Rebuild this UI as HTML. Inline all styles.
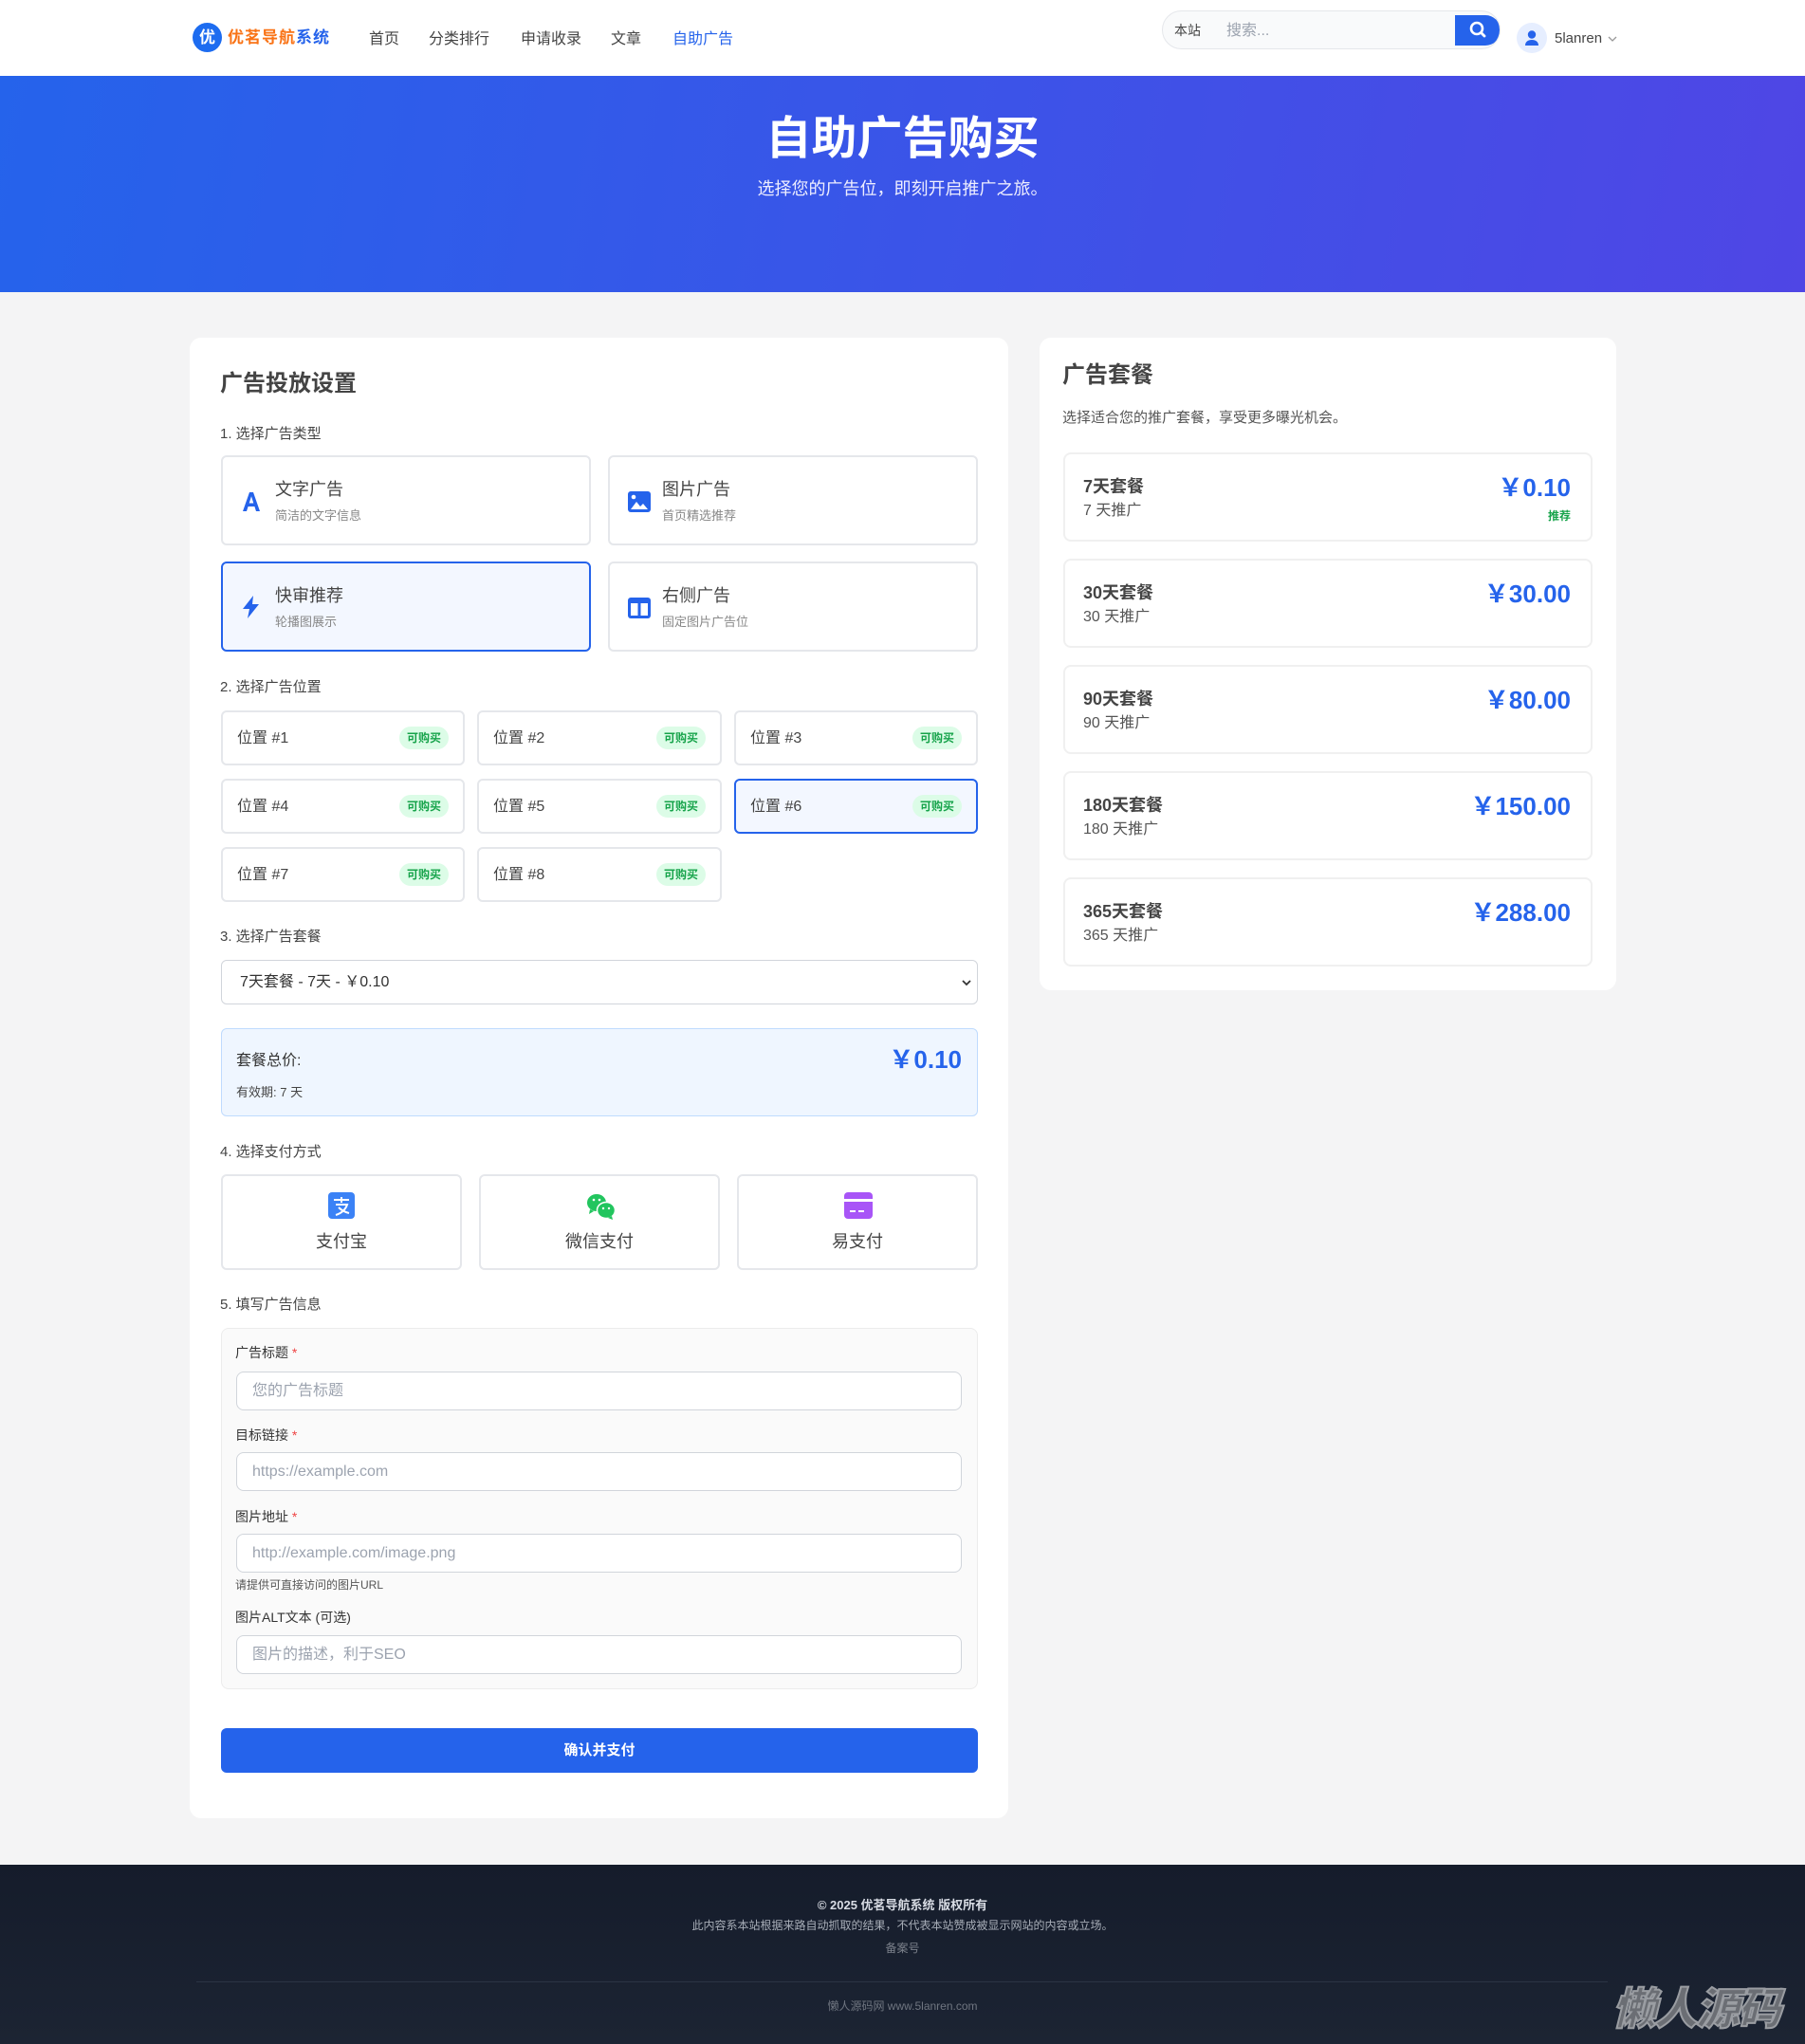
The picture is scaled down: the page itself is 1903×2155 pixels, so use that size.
<!DOCTYPE html>
<html><head><meta charset="utf-8">
<style>
*{box-sizing:border-box;margin:0;padding:0}
body{width:1903px;height:2155px;background:#f4f4f5;font-family:"Liberation Sans","Noto Sans CJK SC",sans-serif;color:#333;position:relative;overflow:hidden}
.a{position:absolute}
.hdr{left:0;top:0;width:1903px;height:80px;background:#fff}
.nav{top:31px;font-size:16px;color:#444;line-height:22px}
.hero{left:0;top:80px;width:1903px;height:228px;background:linear-gradient(100deg,#2563eb 0%,#4f46e5 100%)}
.card{background:#fff;border-radius:12px}
.lbl{font-size:15px;color:#444;line-height:20px}
.tc{border:2px solid #e5e7eb;border-radius:6px;background:#fff}
.tc.sel{border-color:#2563eb;background:#f3f7ff}
.tc .t{position:absolute;left:55px;top:22px;font-size:18px;color:#444;line-height:24px}
.tc .s{position:absolute;left:55px;top:54px;font-size:13px;color:#888;line-height:16px}
.tc svg{position:absolute;left:19px;top:36px}
.pc{border:2px solid #e5e7eb;border-radius:6px;background:#fff;height:58px}
.pc.sel{border-color:#2563eb;background:#f3f7ff}
.pc .t{position:absolute;left:15px;top:18px;font-size:16px;color:#444;line-height:20px}
.pc .b{position:absolute;right:15px;top:15px;width:52px;height:24px;border-radius:12px;background:#dcfce7;color:#16a34a;font-size:12px;font-weight:bold;text-align:center;line-height:24px}
.pay{border:2px solid #e5e7eb;border-radius:6px;background:#fff;top:1238px;height:101px}
.pay .t{position:absolute;left:0;right:0;top:57px;text-align:center;font-size:18px;color:#444;line-height:24px}
.pay svg{position:absolute;left:50%;top:17px;margin-left:-14px}
.fl{font-size:14px;color:#333;line-height:18px;left:248px}
.fl i{color:#ef4444;font-style:normal}
.inp{left:249px;width:765px;height:41px;border:1px solid #d1d5db;border-radius:8px;background:#fff;font-size:16px;color:#9ca3af;padding-left:16px;line-height:39px}
.pk{left:1121px;width:558px;height:94px;border:2px solid #f0f0f0;border-radius:8px;background:#fff}
.pk .n{position:absolute;left:19px;top:22px;font-size:18px;font-weight:bold;color:#444;line-height:24px}
.pk .d{position:absolute;left:19px;top:50px;font-size:16px;color:#555;line-height:20px}
.pk .p{position:absolute;right:21px;top:20px;font-size:26px;font-weight:bold;color:#2563eb;line-height:30px}
.pk .r{position:absolute;right:21px;top:56px;font-size:12px;font-weight:bold;color:#16a34a}
.ft{left:0;top:1966px;width:1903px;height:189px;background:linear-gradient(180deg,#151c2b,#1c2433)}
.ct{left:0;width:1903px;text-align:center}
</style></head><body>
<div class="a hdr"></div>
<div class="a" style="left:203px;top:24px;width:31px;height:31px;border-radius:50%;background:#1d6cf0;color:#fff;font-weight:bold;font-size:17px;text-align:center;line-height:31px">优</div>
<div class="a" style="left:240px;top:29px;font-size:17px;font-weight:bold;line-height:22px;letter-spacing:1px"><span style="color:#f97316">优茗导航</span><span style="color:#2563eb">系统</span></div>
<div class="a nav" style="left:389px">首页</div>
<div class="a nav" style="left:452px">分类排行</div>
<div class="a nav" style="left:549px">申请收录</div>
<div class="a nav" style="left:644px">文章</div>
<div class="a nav" style="left:709px;color:#2563eb">自助广告</div>
<div class="a" style="left:1225px;top:11px;width:357px;height:41px;border:1px solid #e5e7eb;border-radius:21px;background:#f9fafb;overflow:hidden">
 <div class="a" style="left:12px;top:11px;font-size:14px;color:#444;line-height:19px">本站</div>
 <div class="a" style="left:67px;top:10px;font-size:16px;color:#9ca3af;line-height:21px">搜索...</div>
 <div class="a" style="left:308px;top:4px;width:48px;height:32px;background:#2563eb;border-radius:0 18px 18px 0"><svg width="48" height="32"><circle cx="23" cy="14" r="6" fill="none" stroke="#fff" stroke-width="2.6"/><line x1="27.5" y1="18.5" x2="31" y2="22" stroke="#fff" stroke-width="2.8" stroke-linecap="round"/></svg></div>
</div>
<div class="a" style="left:1599px;top:24px;width:32px;height:32px;border-radius:50%;background:#e6eeff"><svg width="32" height="32"><circle cx="16" cy="12.5" r="4.2" fill="#2563eb"/><path d="M9 24c0-4 3-6 7-6s7 2 7 6z" fill="#2563eb"/></svg></div>
<div class="a" style="left:1639px;top:31px;font-size:15px;color:#444;line-height:20px">5lanren <svg width="10" height="8" style="margin-left:2px"><path d="M1 2l4 4 4-4" fill="none" stroke="#999" stroke-width="1.3"/></svg></div>

<div class="a hero"></div>
<div class="a ct" style="top:117px;font-size:48px;font-weight:bold;color:#fff;line-height:60px">自助广告购买</div>
<div class="a ct" style="top:186px;font-size:18px;color:#eef;line-height:26px">选择您的广告位，即刻开启推广之旅。</div>

<div class="a card" style="left:200px;top:356px;width:863px;height:1561px"></div>
<div class="a" style="left:232px;top:390px;font-size:24px;font-weight:bold;color:#444;line-height:30px">广告投放设置</div>
<div class="a lbl" style="left:232px;top:448px">1. 选择广告类型</div>

<div class="a tc" style="left:233px;top:480px;width:390px;height:95px"><svg width="22" height="22" viewBox="0 0 22 22"><path d="M2 21L9 1h4l7 20h-4l-1.6-5H7.6L6 21zM8.7 12.5h4.6L11 5.3z" fill="#2563eb"/></svg><div class="t">文字广告</div><div class="s">简洁的文字信息</div></div>
<div class="a tc" style="left:641px;top:480px;width:390px;height:95px"><svg width="24" height="22" viewBox="0 0 24 22"><rect x="0" y="0" width="24" height="22" rx="3" fill="#2563eb"/><circle cx="6" cy="6" r="2.3" fill="#fff"/><path d="M3 19l6-8 4 5 3-3 5 6z" fill="#fff"/></svg><div class="t">图片广告</div><div class="s">首页精选推荐</div></div>
<div class="a tc sel" style="left:233px;top:592px;width:390px;height:95px"><svg width="22" height="26" viewBox="0 0 22 26" style="top:33px"><path d="M13 1L2 15h7l-2 10 12-15h-7z" fill="#2563eb"/></svg><div class="t">快审推荐</div><div class="s">轮播图展示</div></div>
<div class="a tc" style="left:641px;top:592px;width:390px;height:95px"><svg width="24" height="22" viewBox="0 0 24 22"><rect x="0" y="0" width="24" height="22" rx="3" fill="#2563eb"/><rect x="3" y="6" width="7.5" height="13" fill="#fff"/><rect x="13.5" y="6" width="7.5" height="13" fill="#fff"/></svg><div class="t">右侧广告</div><div class="s">固定图片广告位</div></div>

<div class="a lbl" style="left:232px;top:715px">2. 选择广告位置</div>
<div class="a pc" style="left:233px;top:749px;width:257px"><div class="t">位置 #1</div><div class="b">可购买</div></div>
<div class="a pc" style="left:503px;top:749px;width:258px"><div class="t">位置 #2</div><div class="b">可购买</div></div>
<div class="a pc" style="left:774px;top:749px;width:257px"><div class="t">位置 #3</div><div class="b">可购买</div></div>
<div class="a pc" style="left:233px;top:821px;width:257px"><div class="t">位置 #4</div><div class="b">可购买</div></div>
<div class="a pc" style="left:503px;top:821px;width:258px"><div class="t">位置 #5</div><div class="b">可购买</div></div>
<div class="a pc sel" style="left:774px;top:821px;width:257px"><div class="t">位置 #6</div><div class="b">可购买</div></div>
<div class="a pc" style="left:233px;top:893px;width:257px"><div class="t">位置 #7</div><div class="b">可购买</div></div>
<div class="a pc" style="left:503px;top:893px;width:258px"><div class="t">位置 #8</div><div class="b">可购买</div></div>

<div class="a lbl" style="left:232px;top:978px">3. 选择广告套餐</div>
<div class="a" style="left:233px;top:1012px;width:798px;height:47px;border:1px solid #d1d5db;border-radius:6px;background:#fff"><div class="a" style="left:19px;top:13px;font-size:16px;color:#333;line-height:20px">7天套餐 - 7天 - ￥0.10</div><svg class="a" style="right:6px;top:19px" width="10" height="8"><path d="M1 2l4 4 4-4" fill="none" stroke="#333" stroke-width="1.8"/></svg></div>
<div class="a" style="left:233px;top:1084px;width:798px;height:93px;border:1px solid #bfdbfe;border-radius:6px;background:#eff6ff">
 <div class="a" style="left:15px;top:23px;font-size:16px;color:#333;line-height:22px">套餐总价:</div>
 <div class="a" style="left:15px;top:58px;font-size:13px;color:#444;line-height:18px">有效期: 7 天</div>
 <div class="a" style="right:16px;top:16px;font-size:26px;font-weight:bold;color:#2563eb;line-height:32px">￥0.10</div>
</div>

<div class="a lbl" style="left:232px;top:1205px">4. 选择支付方式</div>
<div class="a pay" style="left:233px;width:254px"><svg width="28" height="28" viewBox="0 0 28 28"><rect width="28" height="28" rx="4" fill="#3b82f6"/><path d="M6 8h16M14 5v6M8 13h12c-2 6-6 9-12 11M11 16c3 3 7 5 11 6" fill="none" stroke="#fff" stroke-width="2"/></svg><div class="t">支付宝</div></div>
<div class="a pay" style="left:505px;width:254px"><svg width="32" height="30" viewBox="0 0 32 30"><ellipse cx="11" cy="11" rx="10" ry="9" fill="#22c55e"/><path d="M4 18l-1 5 5-3z" fill="#22c55e"/><ellipse cx="21" cy="19" rx="9.5" ry="8.5" fill="#22c55e" stroke="#fff" stroke-width="1.5"/><path d="M27 25l1 4-5-2z" fill="#22c55e"/><circle cx="8" cy="8" r="1.3" fill="#fff"/><circle cx="14" cy="8" r="1.3" fill="#fff"/><circle cx="18" cy="17" r="1.2" fill="#fff"/><circle cx="24" cy="17" r="1.2" fill="#fff"/></svg><div class="t">微信支付</div></div>
<div class="a pay" style="left:777px;width:254px"><svg width="30" height="28" viewBox="0 0 30 28"><rect width="30" height="28" rx="4" fill="#a855f7"/><rect x="0" y="7" width="30" height="3" fill="#fff"/><path d="M6 20h6M15 20h6" stroke="#fff" stroke-width="2"/></svg><div class="t">易支付</div></div>

<div class="a lbl" style="left:232px;top:1366px">5. 填写广告信息</div>
<div class="a" style="left:233px;top:1400px;width:798px;height:381px;border:1px solid #ececec;border-radius:8px;background:#fafafa"></div>
<div class="a fl" style="top:1417px">广告标题 <i>*</i></div>
<div class="a inp" style="top:1446px">您的广告标题</div>
<div class="a fl" style="top:1504px">目标链接 <i>*</i></div>
<div class="a inp" style="top:1531px">https://example.com</div>
<div class="a fl" style="top:1590px">图片地址 <i>*</i></div>
<div class="a inp" style="top:1617px">http://example.com/image.png</div>
<div class="a" style="left:248px;top:1663px;font-size:12px;color:#555;line-height:16px">请提供可直接访问的图片URL</div>
<div class="a fl" style="top:1696px">图片ALT文本 (可选)</div>
<div class="a inp" style="top:1724px">图片的描述，利于SEO</div>
<div class="a" style="left:233px;top:1822px;width:798px;height:47px;border-radius:6px;background:#2563eb;color:#fff;font-size:15px;font-weight:bold;text-align:center;line-height:47px">确认并支付</div>

<div class="a card" style="left:1096px;top:356px;width:608px;height:688px"></div>
<div class="a" style="left:1120px;top:381px;font-size:24px;font-weight:bold;color:#444;line-height:30px">广告套餐</div>
<div class="a" style="left:1120px;top:431px;font-size:15px;color:#555;line-height:20px">选择适合您的推广套餐，享受更多曝光机会。</div>
<div class="a pk" style="top:477px"><div class="n">7天套餐</div><div class="d">7 天推广</div><div class="p">￥0.10</div><div class="r">推荐</div></div>
<div class="a pk" style="top:589px"><div class="n">30天套餐</div><div class="d">30 天推广</div><div class="p">￥30.00</div></div>
<div class="a pk" style="top:701px"><div class="n">90天套餐</div><div class="d">90 天推广</div><div class="p">￥80.00</div></div>
<div class="a pk" style="top:813px"><div class="n">180天套餐</div><div class="d">180 天推广</div><div class="p">￥150.00</div></div>
<div class="a pk" style="top:925px"><div class="n">365天套餐</div><div class="d">365 天推广</div><div class="p">￥288.00</div></div>

<div class="a ft"></div>
<div class="a ct" style="top:2000px;font-size:13px;font-weight:bold;color:#d8dce4;line-height:18px">© 2025 优茗导航系统 版权所有</div>
<div class="a ct" style="top:2022px;font-size:12px;color:#a8aeb8;line-height:16px">此内容系本站根据来路自动抓取的结果，不代表本站赞成被显示网站的内容或立场。</div>
<div class="a ct" style="top:2046px;font-size:12px;color:#7c828c;line-height:16px">备案号</div>
<div class="a" style="left:207px;top:2089px;width:1488px;height:1px;background:#2b3444"></div>
<div class="a ct" style="top:2107px;font-size:12px;color:#6f7580;line-height:16px">懒人源码网 www.5lanren.com</div>
<div class="a" style="left:1700px;top:2090px;font-size:46px;font-weight:900;font-style:italic;color:#6b6e74;-webkit-text-stroke:2px #9a9da2;line-height:56px;letter-spacing:-2px">懒人源码</div>
</body></html>
